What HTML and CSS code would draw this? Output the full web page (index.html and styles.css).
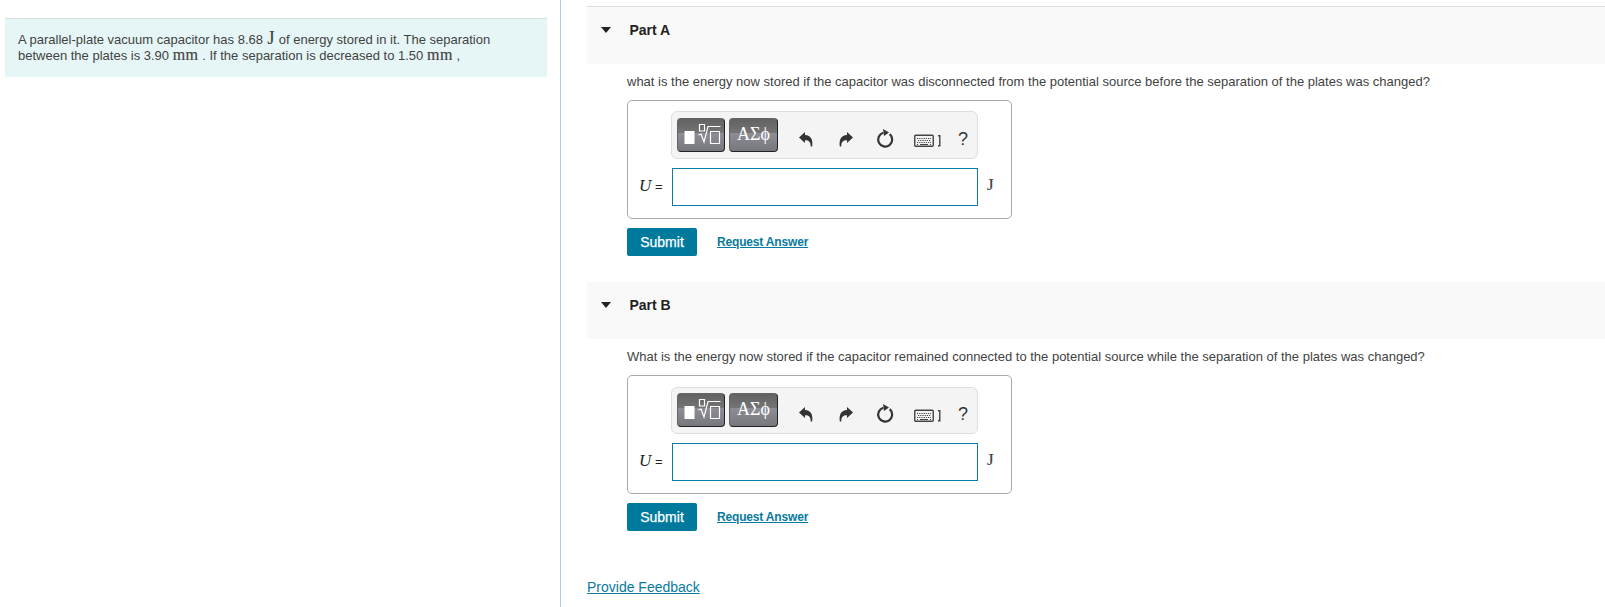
FILE: index.html
```html
<!DOCTYPE html>
<html lang="en">
<head>
<meta charset="utf-8">
<title>Capacitor energy</title>
<link rel="stylesheet" href="styles.css">
</head>
<body>
<svg class="defs" width="0" height="0" aria-hidden="true">
  <symbol id="template" viewBox="0 0 46 32">
    <path class="solid" d="M6.500 12h10v13h-10z"/>
    <path class="line" d="M21.500 5.500h5v6.500h-5zM20.500 16l2.500-1 3 8L30 7.500H42.500M32.500 12.500h9v12h-9z"/>
  </symbol>
  <symbol id="undo" viewBox="0 0 14 16">
    <path d="M0 5.500 6 0v3c6 .3 8 4.500 7.200 11.500h-1.500C11.800 10 10 8.300 6 8.300V11z"/>
  </symbol>
  <symbol id="reset" viewBox="0 0 18 20">
    <path class="ring" d="M7.300 3.800A7 7 0 1 0 13.700 5.200"/>
    <path d="M7 0l6 3.500L8 7z"/>
  </symbol>
  <symbol id="keyboard" viewBox="0 0 28 14">
    <rect class="frame" x=".75" y="1.250" width="18.500" height="11" rx="1"/>
    <path class="keys" d="M3 4.500h14M4 6.500h13M3 8.500h14"/>
    <path class="space" d="M6 10.500h8M3 10.500h1M16 10.500h1"/>
    <path class="frame" d="M24 1.800h1.800v10H24"/>
  </symbol>
</svg>
<div class="page">
  <aside class="intro">
    <p class="problem">A parallel-plate vacuum capacitor has 8.68 <span class="unit big">J</span> of energy stored in it. The separation<br>between the plates is 3.90 <span class="unit">mm</span> . If the separation is decreased to 1.50 <span class="unit">mm</span> ,</p>
  </aside>
  <main class="parts">
    <section class="part part-a">
      <h2 class="heading"><i class="arrow"></i>Part A</h2>
      <div class="body">
        <p class="question">what is the energy now stored if the capacitor was disconnected from the potential source before the separation of the plates was changed?</p>
        <div class="answer">
          <div class="toolbar">
            <button class="tool"><svg width="46" height="32"><use href="#template"/></svg></button>
            <button class="tool greek">ΑΣϕ</button>
            <svg class="icon undo" width="14" height="16"><use href="#undo"/></svg>
            <svg class="icon redo" width="14" height="16"><use href="#undo"/></svg>
            <svg class="icon reset" width="18" height="20"><use href="#reset"/></svg>
            <svg class="icon keyboard" width="28" height="14"><use href="#keyboard"/></svg>
            <span class="help">?</span>
          </div>
          <div class="entry"><span class="label"><i>U</i> =</span><input class="field" type="text" aria-label="U"><span class="unit after">J</span></div>
        </div>
        <div class="actions"><button class="submit">Submit</button><a class="request">Request Answer</a></div>
      </div>
    </section>
    <section class="part part-b">
      <h2 class="heading"><i class="arrow"></i>Part B</h2>
      <div class="body">
        <p class="question">What is the energy now stored if the capacitor remained connected to the potential source while the separation of the plates was changed?</p>
        <div class="answer">
          <div class="toolbar">
            <button class="tool"><svg width="46" height="32"><use href="#template"/></svg></button>
            <button class="tool greek">ΑΣϕ</button>
            <svg class="icon undo" width="14" height="16"><use href="#undo"/></svg>
            <svg class="icon redo" width="14" height="16"><use href="#undo"/></svg>
            <svg class="icon reset" width="18" height="20"><use href="#reset"/></svg>
            <svg class="icon keyboard" width="28" height="14"><use href="#keyboard"/></svg>
            <span class="help">?</span>
          </div>
          <div class="entry"><span class="label"><i>U</i> =</span><input class="field" type="text" aria-label="U"><span class="unit after">J</span></div>
        </div>
        <div class="actions"><button class="submit">Submit</button><a class="request">Request Answer</a></div>
      </div>
    </section>
    <a class="feedback">Provide Feedback</a>
  </main>
</div>
</body>
</html>
```
FILE: styles.css
```css
* { box-sizing: border-box; }
body { margin: 0; background: #fff; color: #424242; font: 13px/16px "Liberation Sans", Arial, sans-serif; }
p, h2 { margin: 0; }
.defs { display: block; height: 0; }
.page { display: flex; height: 607px; overflow: hidden; }
.intro { width: 561px; flex: none; border-right: 1px solid #b7cbdc; padding: 18px 13px 0 5px; }
.problem { height: 59px; padding: 13px 0 0 13px; background: #e6f6f6; border-top: 1px solid #dadddd; white-space: nowrap; }
.unit { font-family: "Liberation Serif", serif; font-size: 16px; line-height: 1px; letter-spacing: .5px; -webkit-text-stroke: .2px; }
.big { font-size: 18px; letter-spacing: 0; margin: 0 .5px 0 1px; }
.parts { flex: 1; padding: 6px 0 0 26px; display: flex; flex-direction: column; align-items: flex-start; }
.part { width: 100%; }
.heading { display: flex; align-items: flex-start; background: #f9f9f9; height: 57px; padding: 15px 0 0 14px; font-size: 14px; line-height: 16px; color: #222; }
.part-a .heading { height: 58px; border-top: 1px solid #dcdcdc; }
.arrow { border: 5.5px solid transparent; border-top: 6px solid #222; border-bottom: 0; margin: 5px 18.500px 0 0; }
.body { padding: 10px 0 0 40px; }
.question { white-space: nowrap; height: 26px; }
.answer { width: 385px; height: 119px; border: 1px solid #a9a9a9; border-radius: 5px; padding: 10px 0 0 43px; }
.toolbar { display: flex; width: 307px; height: 48px; padding: 6px 0 0 5px; border: 1px solid #dedede; border-radius: 6px; background: #f4f4f4; }
.part-b .toolbar { height: 47px; margin-top: 1px; padding-top: 5px; }
.tool { width: 48px; height: 34px; padding: 0; margin: 0 4px 0 0; border: 1px solid #656569; border-right-color: #222; border-bottom-color: #222; border-radius: 4px; background: linear-gradient(#626263 0, #747475 43%, #8d8d95 44%, #77777e 100%); color: #fff; overflow: hidden; }
.tool svg { display: block; }
.greek { width: 49px; margin-right: 21px; font: 18px/28px "Liberation Serif", serif; padding-bottom: 3px; }
.icon { flex: none; fill: #333; margin-top: 14px; }
.undo { margin-right: 26px; }
.redo { transform: scaleX(-1); margin-right: 23px; }
.reset { margin-top: 11px; margin-right: 20px; }
.keyboard { margin-top: 16px; margin-right: 16px; }
.solid { fill: #fff; }
.line { fill: none; stroke: #fff; stroke-width: 1.2; }
.ring { fill: none; stroke: #333; stroke-width: 2.2; }
.frame { fill: none; stroke: #444; stroke-width: 1.4; }
.keys { fill: none; stroke: #444; stroke-dasharray: 1.2 1; }
.space { stroke: #444; }
.help { font-size: 18px; line-height: 20px; margin-top: 11px; color: #333; }
.entry { display: flex; margin: 9px 0 0 -32px; }
.label { width: 33px; padding-top: 10px; color: #222; white-space: nowrap; }
.label i { font: italic 17px/16px "Liberation Serif", serif; }
.field { width: 306px; height: 38px; border: 1px solid #087ea4; border-radius: 0; background: #fff; padding: 0; }
.after { font-size: 17px; line-height: 16px; margin: 9px 0 0 9px; }
.actions { display: flex; margin-top: 9px; }
.submit { width: 70px; height: 28px; background: #007a9c; color: #fff; border: 0; border-radius: 2px; font: 14px/16px "Liberation Sans", sans-serif; padding: 0; -webkit-text-stroke: .25px; }
.request { margin: 6px 0 0 20px; font-size: 12px; font-weight: bold; letter-spacing: -.17px; color: #077a9e; text-decoration: underline; }
.part-b { margin-top: 26px; }
.feedback { margin-top: 48px; font-size: 14px; color: #077a9e; text-decoration: underline; }
```
